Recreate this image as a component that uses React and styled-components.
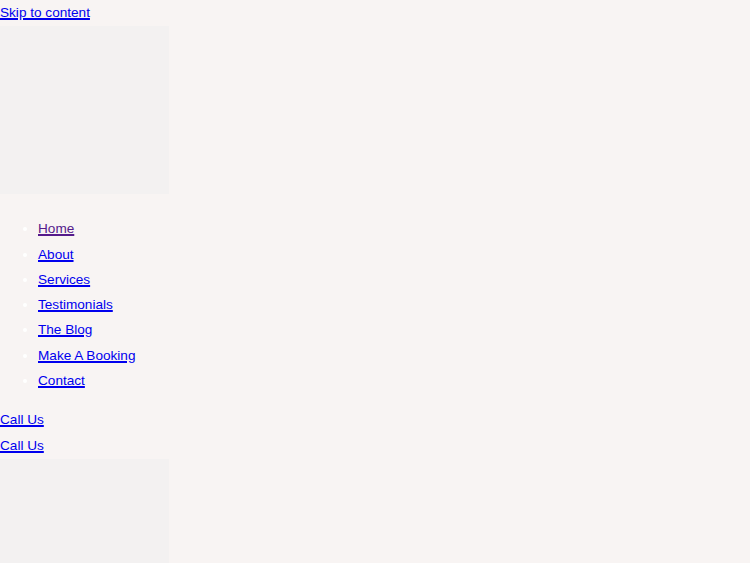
import React from "react";
import styled, { createGlobalStyle } from "styled-components";

const Global = createGlobalStyle`
  html, body { margin: 0; padding: 0; background: #f8f4f3; }
  body { font-family: "Liberation Sans", Arial, sans-serif; font-size: 13.6px; line-height: 25.3px; }
`;

const Page = styled.div`
  display: flex;
  flex-direction: column;
  align-items: flex-start;
`;

const Link = styled.a`
  color: ${(p) => (p.$visited ? "#551a8b" : "#0000ee")};
  text-decoration: underline;
  text-decoration-thickness: 1.5px;
`;

const Placeholder = styled.div`
  width: 169px;
  height: ${(p) => p.$h}px;
  background: #f3f1f1;
  margin-top: 1px;
`;

const NavList = styled.ul`
  margin: 22px 0 14px;
  padding-left: 38px;
  list-style: disc;
  li::marker { color: #ffffff; }
`;

const items = ["Home", "About", "Services", "Testimonials", "The Blog", "Make A Booking", "Contact"];

export default function App() {
  return (
    <Page>
      <Global />
      <Link href="#">Skip to content</Link>
      <Placeholder $h={168} />
      <NavList>
        {items.map((t, i) => (
          <li key={t}>
            <Link href="#" $visited={i === 0}>{t}</Link>
          </li>
        ))}
      </NavList>
      <Link href="#">Call Us</Link>
      <Link href="#">Call Us</Link>
      <Placeholder $h={110} />
    </Page>
  );
}
